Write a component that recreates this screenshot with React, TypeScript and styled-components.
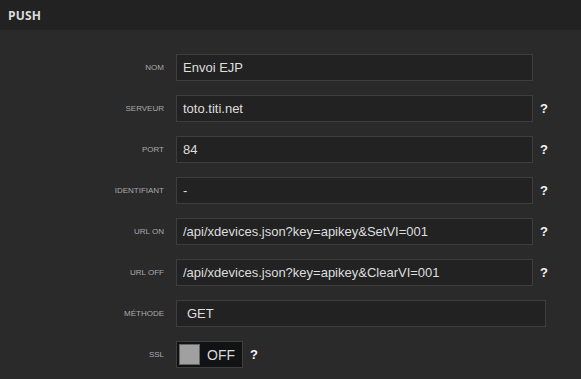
import React from "react";
import styled, { createGlobalStyle } from "styled-components";

const Global = createGlobalStyle`
  html, body { margin: 0; padding: 0; background: #2a2a2a; }
  body { font-family: "Liberation Sans", Arial, sans-serif; }
`;

const Page = styled.div`
  width: 581px;
  height: 379px;
  background: #2a2a2a;
  overflow: hidden;
`;

const Header = styled.div`
  height: 30px;
  background: #222222;
  display: flex;
  align-items: center;
  padding-left: 8px;
  font-family: "Open Sans", "DejaVu Sans", sans-serif;
  font-weight: 700;
  font-size: 12px;
  color: #dcdcdc;
  letter-spacing: 0.2px;
`;

const Form = styled.div`
  display: flex;
  flex-direction: column;
  gap: 14px;
  padding-top: 24px;
`;

const Row = styled.div`
  display: flex;
  align-items: center;
  height: 27px;
`;

const Label = styled.div`
  width: 164px;
  text-align: right;
  font-family: "Liberation Sans", Arial, sans-serif;
  font-size: 8px;
  color: #a9a9a9;
  text-transform: uppercase;
  margin-right: 12px;
`;

const Input = styled.div<{ $wide?: boolean; $pad?: number }>`
  box-sizing: border-box;
  width: ${(p) => (p.$wide ? 370 : 357)}px;
  height: 27px;
  background: #222222;
  border: 1px solid #3e3e3e;
  display: flex;
  align-items: center;
  padding-left: ${(p) => p.$pad ?? 6}px;
  font-size: 13px;
  color: #dedede;
  white-space: nowrap;
`;

const Help = styled.span`
  margin-left: 7px;
  font-family: "Liberation Sans", Arial, sans-serif;
  font-weight: 700;
  font-size: 13px;
  color: #f4f4f4;
`;

const Toggle = styled.div`
  box-sizing: border-box;
  width: 67px;
  height: 27px;
  background: #111213;
  border: 1px solid #3e3e3e;
  display: flex;
  align-items: center;
  padding-left: 2px;
  gap: 7px;
`;

const Knob = styled.div`
  box-sizing: border-box;
  width: 21px;
  height: 21px;
  background: #a0a0a0;
  border: 1px solid #666;
`;

const ToggleText = styled.span`
  font-size: 14px;
  color: #d8d8d8;
`;

const fields: { label: string; value: string; help: boolean }[] = [
  { label: "Nom", value: "Envoi EJP", help: false },
  { label: "Serveur", value: "toto.titi.net", help: true },
  { label: "Port", value: "84", help: true },
  { label: "Identifiant", value: "-", help: true },
  { label: "URL On", value: "/api/xdevices.json?key=apikey&SetVI=001", help: true },
  { label: "URL Off", value: "/api/xdevices.json?key=apikey&ClearVI=001", help: true },
];

export default function App() {
  return (
    <Page>
      <Global />
      <Header>PUSH</Header>
      <Form>
        {fields.map((f) => (
          <Row key={f.label}>
            <Label>{f.label}</Label>
            <Input>{f.value}</Input>
            {f.help && <Help>?</Help>}
          </Row>
        ))}
        <Row>
          <Label>Méthode</Label>
          <Input $wide $pad={10}>GET</Input>
        </Row>
        <Row>
          <Label>SSL</Label>
          <Toggle>
            <Knob />
            <ToggleText>OFF</ToggleText>
          </Toggle>
          <Help>?</Help>
        </Row>
      </Form>
    </Page>
  );
}
